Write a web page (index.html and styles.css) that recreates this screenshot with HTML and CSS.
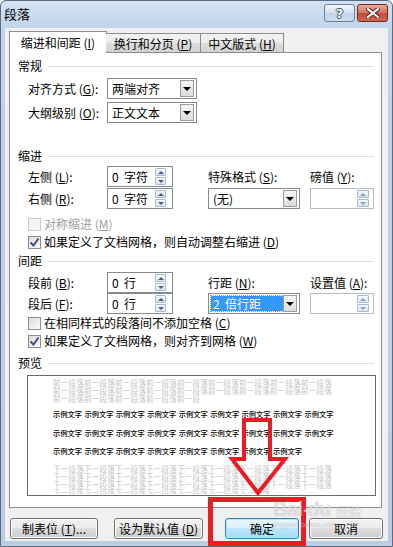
FILE: index.html
```html
<!DOCTYPE html>
<html lang="zh-CN">
<head>
    <meta charset="UTF-8">
    <meta name="viewport" content="width=device-width, initial-scale=1.0">
    <title>段落</title>
    <link rel="stylesheet" href="styles.css">
</head>
<body>
    <div class="window">
        <div class="titlebar">
            <span class="title">段落</span>
            <div class="caption-btns">
                <span class="cap-btn help">?</span>
                <span class="cap-btn close">
                    <svg width="14" height="10" viewBox="0 0 14 10">
                        <path d="M2 1 L12 9 M12 1 L2 9" stroke="#5a1e18" stroke-width="4.2" stroke-linecap="square"/>
                        <path d="M2 1 L12 9 M12 1 L2 9" stroke="#fff" stroke-width="2.2" stroke-linecap="square"/>
                    </svg>
                </span>
            </div>
        </div>

        <div class="client">
            <div class="tabs">
                <div class="tab active">缩进和间距 (<u>I</u>)</div>
                <div class="tab tab-2">换行和分页 (<u>P</u>)</div>
                <div class="tab tab-3">中文版式 (<u>H</u>)</div>
            </div>

            <div class="panel">
                <div class="group-title first">常规</div>
                <div class="form-row first-row">
                    <span class="label">对齐方式 (<u>G</u>):</span>
                    <div class="select"><span>两端对齐</span><span class="drop-btn"><i></i></span></div>
                </div>
                <div class="form-row">
                    <span class="label">大纲级别 (<u>O</u>):</span>
                    <div class="select"><span>正文文本</span><span class="drop-btn"><i></i></span></div>
                </div>

                <div class="group-title indent-title">缩进</div>
                <div class="field-grid indent-grid">
                    <span class="label">左侧 (<u>L</u>):</span>
                    <div class="spinner"><span>0&nbsp;&nbsp;字符</span><span class="spin"><b class="up"></b><b class="down"></b></span></div>
                    <span class="label">特殊格式 (<u>S</u>):</span>
                    <span class="label">磅值 (<u>Y</u>):</span>

                    <span class="label">右侧 (<u>R</u>):</span>
                    <div class="spinner"><span>0&nbsp;&nbsp;字符</span><span class="spin"><b class="up"></b><b class="down"></b></span></div>
                    <div class="select wide"><span>(无)</span><span class="drop-btn"><i></i></span></div>
                    <div class="spinner small disabled"><span></span><span class="spin"><b class="up"></b><b class="down"></b></span></div>
                </div>

                <div class="check-row gap-top disabled"><span class="check"></span>对称缩进 (<u>M</u>)</div>
                <div class="check-row"><span class="check checked"><svg width="11" height="11" viewBox="0 0 11 11"><path d="M1.5 5.5 L4.5 8.5 L9.5 1.5" fill="none" stroke="#3b4f8c" stroke-width="2"/></svg></span>如果定义了文档网格，则自动调整右缩进 (<u>D</u>)</div>

                <div class="group-title spacing-title">间距</div>
                <div class="field-grid spacing-grid">
                    <span class="label">段前 (<u>B</u>):</span>
                    <div class="spinner"><span>0&nbsp;&nbsp;行</span><span class="spin"><b class="up"></b><b class="down"></b></span></div>
                    <span class="label">行距 (<u>N</u>):</span>
                    <span class="label">设置值 (<u>A</u>):</span>

                    <span class="label">段后 (<u>F</u>):</span>
                    <div class="spinner"><span>0&nbsp;&nbsp;行</span><span class="spin"><b class="up"></b><b class="down"></b></span></div>
                    <div class="select wide focused"><span class="picked">2&nbsp;&nbsp;倍行距</span><span class="drop-btn"><i></i></span></div>
                    <div class="spinner small disabled"><span></span><span class="spin"><b class="up"></b><b class="down"></b></span></div>
                </div>

                <div class="check-row"><span class="check"></span>在相同样式的段落间不添加空格 (<u>C</u>)</div>
                <div class="check-row"><span class="check checked"><svg width="11" height="11" viewBox="0 0 11 11"><path d="M1.5 5.5 L4.5 8.5 L9.5 1.5" fill="none" stroke="#3b4f8c" stroke-width="2"/></svg></span>如果定义了文档网格，则对齐到网格 (<u>W</u>)</div>

                <div class="group-title preview-title">预览</div>
                <div class="preview">
                    <div class="pv-gray">前一段落前一段落前一段落前一段落前一段落前一段落前一段落前一段落前一段落前一段落前一段落前一段落前一段落前一段落前一段落前一段落前一段落前一段落前一段落前一段落前一段落前一段落前一段</div>
                    <div class="pv-sample">示例文字 示例文字 示例文字 示例文字 示例文字 示例文字 示例文字 示例文字 示例文字 示例文字 示例文字 示例文字 示例文字 示例文字 示例文字 示例文字 示例文字 示例文字 示例文字 示例文字 示例文字 示例文字 示例文字 示例文字 示例文字 示例文字</div>
                    <div class="pv-gray pv-next">下一段落下一段落下一段落下一段落下一段落下一段落下一段落下一段落下一段落下一段落下一段落下一段落下一段落下一段落下一段落下一段落下一段落下一段落下一段落下一段落下一段落下一段落下一段落下一段落下一段落下一段落下一段落下一段落下一段落下一段落下一段落下一段落下一段落下一段落</div>
                </div>
            </div>

            <div class="buttons">
                <span class="btn btn-tabs">制表位 (<u>T</u>)...</span>
                <span class="btn btn-default">设为默认值 (<u>D</u>)</span>
                <span class="btn btn-ok">确定</span>
                <span class="btn btn-cancel">取消</span>
            </div>
        </div>
    </div>

    <!-- red marks drawn over the screenshot -->
    <svg class="marks" width="393" height="547" viewBox="0 0 393 547">
        <polygon points="244,420 270,420 270,459 285,459 258,493 232,459 244,459" fill="none" stroke="#ec1c24" stroke-width="4"/>
        <rect x="210.5" y="499.5" width="93" height="44" fill="none" stroke="#ec1c24" stroke-width="5"/>
    </svg>

    <div class="watermark">
        <div class="wm-logo">Bai<span class="paw">·</span>du <span class="wm-cn">经验</span></div>
        <div class="wm-url">jingyan.baidu.com</div>
    </div>
</body>
</html>
```

FILE: styles.css
```css
* {
    box-sizing: border-box;
}

body {
    margin: 0;
    width: 393px;
    height: 547px;
    overflow: hidden;
    position: relative;
    font-family: "Noto Sans CJK SC", "Liberation Sans", sans-serif;
    font-size: 12px;
    color: #000;
    background: #fff;
}

u {
    text-decoration: underline;
    text-underline-offset: 1px;
}

/* window frame */
.window {
    width: 393px;
    height: 547px;
    display: flex;
    flex-direction: column;
    background: linear-gradient(#d3e2f3, #bfd3eb 30px, #b9cde6);
    border: 1px solid #5b6b80;
    border-radius: 6px 6px 0 0;
    padding: 0 4px 5px 4px;
}

.titlebar {
    height: 27px;
    display: flex;
    justify-content: space-between;
    align-items: flex-start;
}

.title {
    margin-left: -1px;
    margin-top: 5px;
    font-size: 13px;
    line-height: 16px;
}

.caption-btns {
    display: flex;
    gap: 2px;
    margin-top: 3px;
}

.cap-btn {
    height: 18px;
    width: 31px;
    border-radius: 3px;
    display: flex;
    align-items: center;
    justify-content: center;
}

.help {
    background: linear-gradient(#eef3fa, #d6e2f1 50%, #c3d5ec 50%, #cddcef);
    border: 1px solid #6d7f99;
    color: #fff;
    font-family: "DejaVu Sans", sans-serif;
    font-weight: bold;
    font-size: 13px;
    text-shadow: -1px 0 #3d4a5e, 1px 0 #3d4a5e, 0 -1px #3d4a5e, 0 1px #3d4a5e;
}

.close {
    background: linear-gradient(#e9a99c, #d3705e 50%, #c44a33 50%, #cf6a52);
    border: 1px solid #6e2a20;
}

/* client area */
.client {
    flex: 1;
    background: #f0f0f0;
    padding-top: 3px;
}

.tabs {
    display: flex;
    align-items: flex-end;
    margin-left: 4px;
    margin-bottom: -1px;
    height: 22px;
    position: relative;
    z-index: 1;
}

.tab {
    height: 20px;
    border: 1px solid #898c95;
    background: linear-gradient(#f3f3f3, #ebebeb 50%, #dddddd 50%, #d2d2d2);
    display: flex;
    align-items: center;
    justify-content: center;
    margin-left: -1px;
    line-height: 14px;
    padding-top: 1px;
    white-space: nowrap;
}

.tab.active {
    height: 22px;
    width: 98px;
    background: #fff;
    border-bottom: none;
    margin-left: 0;
    padding-top: 0;
}

.tab-2 {
    width: 95px;
    border-left: none;
}

.tab-3 {
    width: 84px;
}

.panel {
    margin: 0 6px 0 4px;
    height: 456px;
    background: #fff;
    border: 1px solid #898c95;
}

.group-title {
    display: flex;
    align-items: center;
    height: 16px;
    padding: 0 7px 0 8px;
    line-height: 16px;
}

.group-title::after {
    content: "";
    flex: 1;
    height: 1px;
    margin-left: 6px;
    background: #d5dfe5;
}

.group-title.first {
    margin-top: 5px;
}

.indent-title {
    margin-top: 25px;
}

.spacing-title {
    margin-top: 2px;
}

.preview-title {
    margin-top: 5px;
}

.form-row {
    display: flex;
    align-items: center;
    padding-left: 18px;
    margin-top: 3px;
}

.form-row.first-row {
    margin-top: 4px;
}

.form-row .label {
    width: 79px;
}

.label {
    line-height: 16px;
    white-space: nowrap;
}

/* combo boxes */
.select {
    width: 90px;
    height: 21px;
    border: 1px solid #868a92;
    display: flex;
    align-items: center;
    padding-left: 4px;
    background: #fff;
    line-height: 15px;
}

.select.wide {
    width: 92px;
}

.drop-btn {
    margin-left: auto;
    margin-right: 2px;
    width: 14px;
    height: 17px;
    border: 1px solid #9c9c9c;
    background: linear-gradient(#f5f5f5, #dcdcdc);
    display: flex;
    align-items: center;
    justify-content: center;
}

.drop-btn i {
    width: 0;
    height: 0;
    border-left: 4px solid transparent;
    border-right: 4px solid transparent;
    border-top: 4px solid #000;
}

.select.focused {
    padding-left: 2px;
}

.picked {
    background: #3399ff;
    color: #fff;
    width: 72px;
    height: 15px;
    padding-left: 2px;
    outline: 1px dotted #d08a3a;
    line-height: 15px;
}

/* spin boxes */
.field-grid {
    display: grid;
    grid-template-columns: 79px 101px 102px 64px;
    grid-template-rows: 21px 21px;
    align-items: center;
    padding-left: 18px;
}

.indent-grid {
    margin-top: 2px;
    row-gap: 1px;
}

.spacing-grid {
    margin-top: 3px;
}

.spinner {
    width: 66px;
    height: 21px;
    border: 1px solid #868a92;
    display: flex;
    align-items: center;
    padding-left: 4px;
    line-height: 15px;
    background: #fff;
}

.spinner.small {
    width: 64px;
}

.spinner.disabled {
    border-color: #b9bcc2;
}

.spin {
    margin-left: auto;
    margin-right: 6px;
    width: 11px;
    display: flex;
    flex-direction: column;
    gap: 1px;
}

.spinner.small .spin {
    width: 12px;
    margin-right: 4px;
}

.spin b {
    height: 8px;
    border: 1px solid #a9bad2;
    border-radius: 1px;
    background: linear-gradient(#f4f8fd, #d9e4f2);
    display: flex;
    align-items: center;
    justify-content: center;
}

.spin b::after {
    content: "";
    width: 0;
    height: 0;
    border-left: 3px solid transparent;
    border-right: 3px solid transparent;
}

.spin .up::after {
    border-bottom: 3px solid #4a5e86;
}

.spin .down::after {
    border-top: 3px solid #4a5e86;
}

.spinner.disabled .spin .up::after {
    border-bottom-color: #8aa0c0;
}

.spinner.disabled .spin .down::after {
    border-top-color: #8aa0c0;
}

/* check boxes */
.check-row {
    display: flex;
    align-items: center;
    height: 18px;
    padding-left: 18px;
    line-height: 16px;
}

.check-row.gap-top {
    margin-top: 6px;
}

.check-row.disabled {
    color: #a0a0a0;
}

.check {
    width: 13px;
    height: 13px;
    margin-right: 3px;
    border: 1px solid #8e8f8f;
    background: linear-gradient(135deg, #dcdcdc, #fbfbfb);
    display: flex;
    align-items: center;
    justify-content: center;
}

.check-row.disabled .check {
    border-color: #c8c8c8;
    background: #f4f4f4;
}

/* preview */
.preview {
    margin: 4px 0 0 17px;
    width: 349px;
    height: 121px;
    border: 1px solid #6a6a6a;
    padding: 3px 0 0 25px;
    overflow: hidden;
}

.pv-gray {
    width: 280px;
    color: #c6c6c6;
    font-size: 7.5px;
    line-height: 8px;
    letter-spacing: 0.25px;
    word-break: break-all;
}

.pv-sample {
    width: 282px;
    margin-top: 2px;
    font-size: 7.25px;
    font-weight: 500;
    line-height: 18.5px;
    word-spacing: 0.8px;
    word-break: keep-all;
    color: #000;
}

.pv-next {
    margin-top: 4px;
    max-height: 29px;
    overflow: hidden;
}

/* dialog buttons */
.buttons {
    display: flex;
    margin-top: 10px;
    padding-left: 5px;
}

.btn {
    height: 21px;
    border: 1px solid #707070;
    border-radius: 3px;
    background: linear-gradient(#f2f2f2, #ebebeb 50%, #dddddd 50%, #cfcfcf);
    box-shadow: inset 0 0 0 1px #fbfbfb;
    display: flex;
    align-items: center;
    justify-content: center;
    line-height: 15px;
    white-space: nowrap;
}

.btn-tabs {
    width: 88px;
}

.btn-default {
    width: 89px;
    margin-left: 16px;
}

.btn-ok {
    width: 74px;
    margin-left: 22px;
    border-color: #3c7fb1;
    background: linear-gradient(#eaf6fd, #d9f0fc 50%, #bee6fd 50%, #a7d9f5);
    box-shadow: inset 0 0 0 1px #b6e5fb;
}

.btn-cancel {
    width: 74px;
    margin-left: 10px;
}

/* overlays */
.marks {
    position: absolute;
    left: 0;
    top: 0;
    pointer-events: none;
}

.watermark {
    position: absolute;
    left: 273px;
    top: 500px;
    color: rgba(255, 255, 255, 0.55);
    text-shadow: 0 0 1px rgba(110, 110, 110, 0.45);
    pointer-events: none;
}

.wm-logo {
    font-family: "Liberation Sans", sans-serif;
    font-weight: bold;
    font-size: 20px;
    line-height: 18px;
    letter-spacing: -0.5px;
}

.paw {
    font-size: 16px;
}

.wm-cn {
    font-family: "Noto Sans CJK SC", sans-serif;
    font-size: 13px;
    font-weight: normal;
}

.wm-url {
    font-family: "Liberation Sans", sans-serif;
    font-size: 8px;
    line-height: 10px;
    color: rgba(255, 255, 255, 0.4);
}
```
